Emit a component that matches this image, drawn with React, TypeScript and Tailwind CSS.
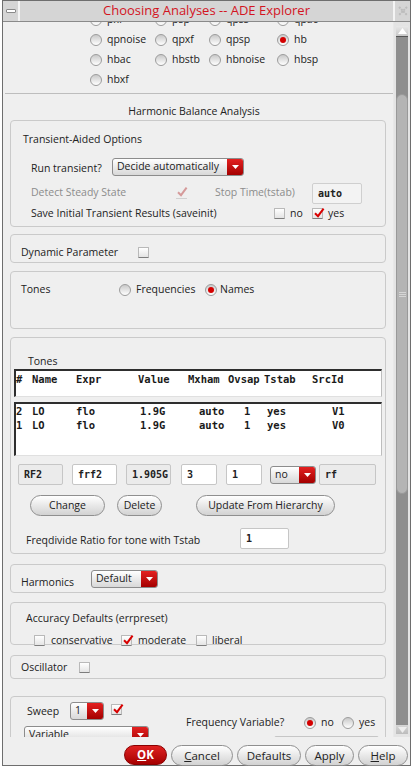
import React from "react"

const mono = "font-['DejaVu_Sans_Mono',monospace] font-bold text-[10px]"

function Radio({ on = false }: { on?: boolean }) {
  return (
    <span className="flex h-[12px] w-[12px] shrink-0 items-center justify-center rounded-full border border-[#9c9c9c] bg-linear-to-b from-[#c9c9c9] to-white">
      {on && <span className="h-[6px] w-[6px] rounded-full bg-[#d40000]" />}
    </span>
  )
}

function Check({ on = false, dim = false }: { on?: boolean; dim?: boolean }) {
  return (
    <span
      className={
        dim
          ? "relative block h-[11px] w-[11px] shrink-0 border-b border-[#d0d0d0]"
          : "relative block h-[11px] w-[11px] shrink-0 rounded-[1px] border border-[#b9b9b9] border-b-[#7d7d7d] bg-linear-to-b from-white to-[#e4e4e4]"
      }
    >
      {on && (
        <svg className="absolute -top-[2px] left-[0px]" width="12" height="12" viewBox="0 0 12 12">
          <path d="M2 6.2 L5 9.2 L10.6 1.6" fill="none" stroke={dim ? "#d59a9a" : "#d80000"} strokeWidth="2" />
        </svg>
      )}
    </span>
  )
}

function Combo({ label, w }: { label: string; w: string }) {
  return (
    <div className={`flex h-[18px] ${w} shrink-0 rounded-[3px] border border-[#8c8c8c] bg-linear-to-b from-white to-[#d8d8d8]`}>
      <span className="flex-1 overflow-hidden pl-[4px] leading-[15px] whitespace-nowrap">{label}</span>
      <span className="flex w-[16px] items-center justify-center rounded-r-[2px] bg-linear-to-b from-[#e42020] to-[#a40000]">
        <svg width="7" height="4" viewBox="0 0 7 4">
          <path d="M0 0h7L3.5 4z" fill="#fff" />
        </svg>
      </span>
    </div>
  )
}

function Pill({ children, w }: { children: React.ReactNode; w: string }) {
  return (
    <span className={`flex h-[21px] ${w} shrink-0 items-center justify-center rounded-full border border-[#8f8f8f] bg-linear-to-b from-white to-[#d2d2d2]`}>
      {children}
    </span>
  )
}

function Field({ v, w, ro = false }: { v: string; w: string; ro?: boolean }) {
  return (
    <span
      className={`flex h-[21px] ${w} shrink-0 items-center rounded-[2px] border border-[#c6c6c6] pl-[5px] ${mono} ${
        ro ? "bg-[#ebebeb]" : "bg-white"
      }`}
    >
      {v}
    </span>
  )
}

const panel = "mx-[7px] rounded-[4px] border border-[#cacaca]"

const rows = [
  ["qpnoise", "qpxf", "qpsp", "hb"],
  ["hbac", "hbstb", "hbnoise", "hbsp"],
  ["hbxf"],
]
const colW = ["w-[65px]", "w-[54px]", "w-[68px]", "w-[60px]"]

function RadioRow({ r }: { r: string[] }) {
  return (
    <div className="flex h-[20px] shrink-0 items-center">
      {r.map((n, j) => (
        <span key={n} className={`flex items-center gap-[5px] ${colW[j]}`}>
          <Radio on={n === "hb"} />
          <span>{n}</span>
        </span>
      ))}
    </div>
  )
}

const tones = [
  ["2", "LO", "flo", "1.9G", "auto", "1", "yes", "V1"],
  ["1", "LO", "flo", "1.9G", "auto", "1", "yes", "V0"],
]

function ToneRow({ c }: { c: string[] }) {
  return (
    <div className="flex h-[14px] items-center whitespace-pre">
      <span className="w-[16px]">{c[0]}</span>
      <span className="w-[44px]">{c[1]}</span>
      <span className="w-[62px]">{c[2]}</span>
      <span className="w-[50px] pl-[2px]">{c[3]}</span>
      <span className="w-[40px] pl-[11px]">{c[4]}</span>
      <span className="w-[36px] pl-[16px]">{c[5]}</span>
      <span className="w-[48px] pl-[3px]">{c[6]}</span>
      <span className="pl-[20px]">{c[7]}</span>
    </div>
  )
}

const listBox =
  "border-t-2 border-l-2 border-t-[#2e2e2e] border-l-[#2e2e2e] border-r border-b border-r-[#bdbdbd] border-b-[#e0e0e0] bg-white font-['DejaVu_Sans_Mono',monospace] font-bold text-[10.5px] text-[#1a1a1a]"

export default function App() {
  return (
    <div className="h-[767px] w-[413px] overflow-hidden bg-white font-['Open_Sans',sans-serif] text-[10.5px] text-[#222]">
      <div className="ml-[2px] flex h-[766px] w-[409px] flex-col border border-[#6e6e6e] bg-[#efefef]">
        {/* title bar */}
        <div className="flex h-[21px] shrink-0 border-b border-[#8a8a8a] bg-[#d5d5d5]">
          <div className="flex w-[17px] items-center justify-center border-r-2 border-[#f4f4f4]">
            <span className="h-[4px] w-[10px] rounded-[1px] border border-[#8a8a8a] bg-white" />
          </div>
          <div className="flex flex-1 items-center justify-center text-[13px] text-[#d3141f]">
            Choosing Analyses -- ADE Explorer
          </div>
          <div className="flex w-[17px] items-center justify-center border-l-2 border-[#f4f4f4]">
            <svg width="10" height="10" viewBox="0 0 10 10">
              <path d="M1 1l8 8M9 1L1 9" stroke="#bcbcbc" strokeWidth="2" strokeDasharray="2 1" />
            </svg>
          </div>
        </div>

        {/* scroll area */}
        <div className="flex h-[715px] shrink-0">
          <div className="w-[390px] overflow-hidden">
            <div className="flex h-[8px] flex-col justify-end overflow-hidden pl-[87px]">
              <RadioRow r={["pxf", "psp", "qpss", "qpac"]} />
            </div>
            <div className="pl-[87px]">
              {rows.map((r, i) => (
                <RadioRow key={i} r={r} />
              ))}
            </div>
            <div className="mt-[3px] ml-[2px] border-t border-[#bdbdbd]" />
            <div className="flex h-[26px] items-end justify-center pr-[8px]">Harmonic Balance Analysis</div>

            {/* transient-aided */}
            <div className={`${panel} h-[107px]`}>
              <div className="pt-[10px] pl-[12px] leading-[16px]">Transient-Aided Options</div>
              <div className="mt-[11px] flex items-center pl-[20px]">
                <span className="w-[81px] pt-[3px]">Run transient?</span>
                <Combo label="Decide automatically" w="w-[132px]" />
              </div>
              <div className="mt-[6px] flex h-[21px] items-center pl-[20px] text-[#8c8c8c]">
                <span className="w-[145px]">Detect Steady State</span>
                <Check on dim />
                <span className="ml-[28px] w-[97px]">Stop Time(tstab)</span>
                <span className={`flex h-[21px] w-[50px] items-center rounded-[2px] border border-[#cfcfcf] bg-[#f3f3f3] pl-[5px] text-[#222] ${mono}`}>
                  auto
                </span>
              </div>
              <div className="mt-[2px] flex items-center pl-[20px]">
                <span className="w-[243px]">Save Initial Transient Results (saveinit)</span>
                <Check />
                <span className="ml-[5px] w-[22px]">no</span>
                <Check on />
                <span className="ml-[5px]">yes</span>
              </div>
            </div>

            {/* dynamic parameter */}
            <div className={`${panel} mt-[7px] flex h-[29px] items-center pt-[8px] pl-[10px]`}>
              <span className="w-[117px]">Dynamic Parameter</span>
              <Check />
            </div>

            {/* tones mode */}
            <div className={`${panel} mt-[8px] h-[58px] pt-[10px] pl-[10px]`}>
              <div className="flex items-center">
                <span className="w-[98px]">Tones</span>
                <Radio />
                <span className="ml-[5px] w-[69px]">Frequencies</span>
                <Radio on />
                <span className="ml-[3px]">Names</span>
              </div>
            </div>

            {/* tones table */}
            <div className={`${panel} mt-[8px] h-[217px] px-[3px]`}>
              <div className="pt-[16px] pl-[14px] leading-[15px]">Tones</div>
              <div className={`h-[28px] pt-[2px] ${listBox}`}>
                <div className="flex h-[14px] items-center whitespace-pre">
                  <span className="w-[16px]">#</span>
                  <span className="w-[44px]">Name</span>
                  <span className="w-[62px]">Expr</span>
                  <span className="w-[50px]">Value</span>
                  <span className="w-[40px]">Mxham</span>
                  <span className="w-[36px]">Ovsap</span>
                  <span className="w-[48px]">Tstab</span>
                  <span>SrcId</span>
                </div>
              </div>
              <div className={`mt-[5px] h-[54px] pt-[1px] ${listBox}`}>
                {tones.map((t) => (
                  <ToneRow key={t[7]} c={t} />
                ))}
              </div>
              <div className="mt-[8px] flex items-center pl-[4px]">
                <Field v="RF2" w="w-[45px]" ro />
                <span className="ml-[9px]" />
                <Field v="frf2" w="w-[45px]" />
                <span className="ml-[9px]" />
                <Field v="1.905G" w="w-[45px]" ro />
                <span className="ml-[10px]" />
                <Field v="3" w="w-[36px]" />
                <span className="ml-[9px]" />
                <Field v="1" w="w-[36px]" />
                <span className="ml-[8px]" />
                <Combo label="no" w="w-[46px]" />
                <span className="ml-[3px]" />
                <Field v="rf" w="w-[57px]" ro />
              </div>
              <div className="mt-[10px] flex items-center pl-[16px]">
                <Pill w="w-[75px]">Change</Pill>
                <span className="ml-[12px]" />
                <Pill w="w-[45px]">Delete</Pill>
                <span className="ml-[34px]" />
                <Pill w="w-[139px]">Update From Hierarchy</Pill>
              </div>
              <div className="mt-[12px] flex items-center pl-[12px]">
                <span className="w-[214px] pt-[4px]">Freqdivide Ratio for tone with Tstab</span>
                <Field v="1" w="w-[49px]" />
              </div>
            </div>

            {/* harmonics */}
            <div className={`${panel} mt-[10px] flex h-[29px] items-start pl-[10px]`}>
              <span className="mt-[10px] w-[70px]">Harmonics</span>
              <span className="mt-[5px]">
                <Combo label="Default" w="w-[67px]" />
              </span>
            </div>

            {/* accuracy */}
            <div className={`${panel} mt-[9px] h-[43px]`}>
              <div className="pt-[7px] pl-[15px] leading-[16px]">Accuracy Defaults (errpreset)</div>
              <div className="mt-[7px] flex items-center pl-[23px]">
                <Check />
                <span className="ml-[6px] w-[70px]">conservative</span>
                <Check on />
                <span className="ml-[6px] w-[58px]">moderate</span>
                <Check />
                <span className="ml-[5px]">liberal</span>
              </div>
            </div>

            {/* oscillator */}
            <div className={`${panel} mt-[10px] flex h-[24px] items-center pt-[1px] pl-[10px]`}>
              <span className="w-[58px]">Oscillator</span>
              <Check />
            </div>

            {/* sweep */}
            <div className={`${panel} mt-[17px] flex h-[60px]`}>
              <div className="w-[175px] pl-[13px]">
                <div className="mt-[5px] flex items-center">
                  <span className="mt-[2px] w-[46px] pl-[3px]">Sweep</span>
                  <Combo label="1" w="w-[34px]" />
                  <span className="-mt-[4px] ml-[7px]">
                    <Check on />
                  </span>
                </div>
                <div className="mt-[6px]">
                  <Combo label="Variable" w="w-[125px]" />
                </div>
              </div>
              <div className="pt-[18px]">
                <div className="flex items-center">
                  <span className="w-[118px]">Frequency Variable?</span>
                  <Radio on />
                  <span className="ml-[5px] w-[21px]">no</span>
                  <Radio />
                  <span className="ml-[5px]">yes</span>
                </div>
                <div className="mt-[5px] ml-[88px] h-[20px] w-[105px] rounded-[2px] border border-[#c6c6c6] bg-white" />
              </div>
            </div>
          </div>

          {/* scrollbar */}
          <div className="flex w-[17px] flex-col border-l border-[#e8e8e8] bg-[#e4e4e4] px-[2px] pt-[4px] pb-[3px]">
            <div className="flex h-[11px] items-center justify-center border-b border-[#555] bg-linear-to-b from-[#e8e8e8] to-[#c8c8c8]">
              <svg width="9" height="6" viewBox="0 0 9 6">
                <path d="M0 6h9L4.5 0z" fill="#fff" />
              </svg>
            </div>
            <div className="flex flex-1 flex-col bg-[#8e8e8e]">
              <div className="h-[57px]" />
              <div className="flex h-[400px] flex-col items-center justify-center gap-[1px] rounded-[6px] border border-[#999] bg-[#b4b4b4]">
                <span className="h-[1px] w-[7px] bg-[#d6d6d6]" />
                <span className="h-[1px] w-[7px] bg-[#d6d6d6]" />
                <span className="h-[1px] w-[7px] bg-[#d6d6d6]" />
              </div>
            </div>
            <div className="flex h-[9px] items-center justify-center bg-linear-to-b from-[#d6d6d6] to-[#bcbcbc]">
              <svg width="9" height="6" viewBox="0 0 9 6">
                <path d="M0 0h9L4.5 6z" fill="#eee" />
              </svg>
            </div>
          </div>
        </div>

        {/* buttons */}
        <div className="flex flex-1 items-start justify-end gap-[4px] pt-[8px] pr-[2px] text-[11.5px]">
          <span className="flex h-[20px] w-[43px] items-center justify-center rounded-full border border-[#8a0000] bg-linear-to-b from-[#e02020] to-[#a60000] font-bold text-white">
            <span className="underline">O</span>K
          </span>
          <Pill w="w-[62px] h-[20px]">
            <span className="underline">C</span>ancel
          </Pill>
          <Pill w="w-[64px] h-[20px]">Defaults</Pill>
          <Pill w="w-[49px] h-[20px]">Apply</Pill>
          <Pill w="w-[50px] h-[20px]">
            <span className="underline">H</span>elp
          </Pill>
        </div>
      </div>
    </div>
  )
}
